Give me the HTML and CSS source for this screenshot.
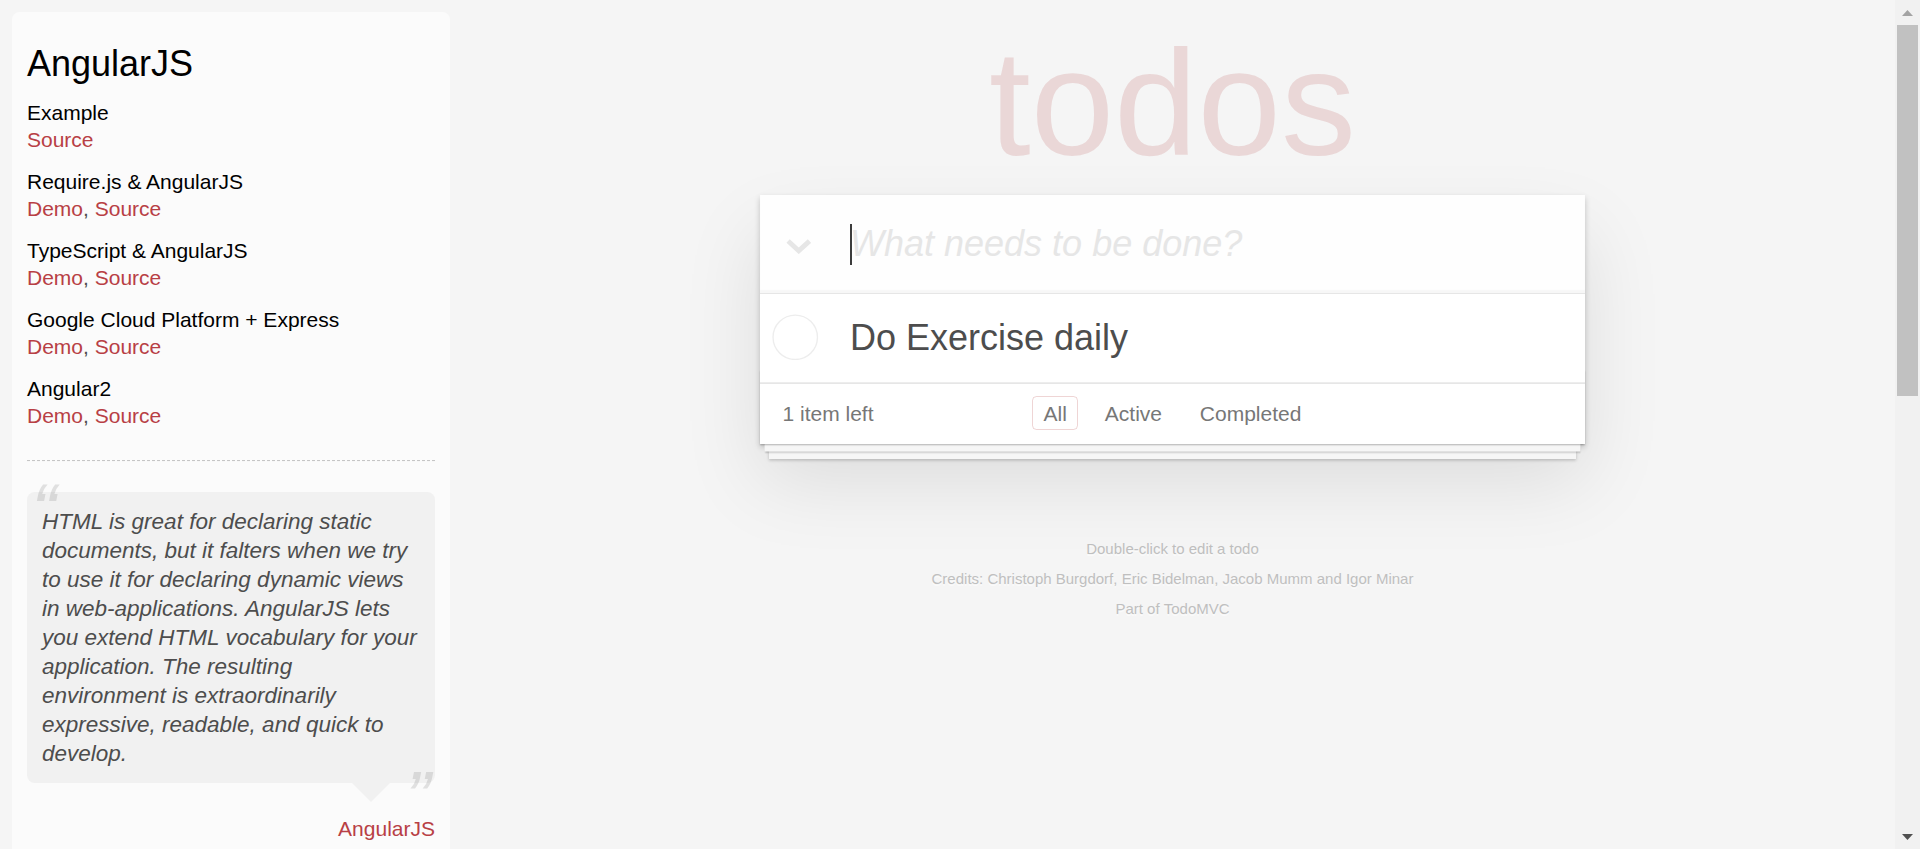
FILE: index.html
```html
<!DOCTYPE html>
<html lang="en">
<head>
<meta charset="utf-8">
<title>AngularJS • TodoMVC</title>
<link rel="stylesheet" href="styles.css">
</head>
<body>
<div class="page">
  <aside class="learn">
    <header>
      <h3>AngularJS</h3>
      <div class="source-links">
        <h5>Example</h5>
        <a href="#">Source</a>
        <h5>Require.js &amp; AngularJS</h5>
        <a href="#">Demo</a>, <a href="#">Source</a>
        <h5>TypeScript &amp; AngularJS</h5>
        <a href="#">Demo</a>, <a href="#">Source</a>
        <h5>Google Cloud Platform + Express</h5>
        <a href="#">Demo</a>, <a href="#">Source</a>
        <h5>Angular2</h5>
        <a href="#">Demo</a>, <a href="#">Source</a>
      </div>
    </header>
    <hr>
    <blockquote class="quote speech-bubble">
      <p>HTML is great for declaring static documents, but it falters when we try to use it for declaring dynamic views in web-applications. AngularJS lets you extend HTML vocabulary for your application. The resulting environment is extraordinarily expressive, readable, and quick to develop.</p>
      <footer><a href="#">AngularJS</a></footer>
    </blockquote>
    <hr>
    <h4>Official Resources</h4>
    <ul>
      <li><a href="#">Tutorial</a></li>
      <li><a href="#">API Reference</a></li>
      <li><a href="#">Developer Guide</a></li>
      <li><a href="#">Applications built with AngularJS</a></li>
      <li><a href="#">Blog</a></li>
      <li><a href="#">FAQ</a></li>
      <li><a href="#">AngularJS Meetups</a></li>
    </ul>
    <h4>Articles and Guides</h4>
    <ul>
      <li><a href="#">Code School AngularJS course</a></li>
      <li><a href="#">5 Awesome AngularJS Features</a></li>
      <li><a href="#">Using Yeoman with AngularJS</a></li>
      <li><a href="#">me&amp;ngular - an introduction to MVW</a></li>
    </ul>
    <h4>Community</h4>
    <ul>
      <li><a href="#">Walkthroughs and Tutorials on YouTube</a></li>
      <li><a href="#">Google Groups mailing list</a></li>
      <li><a href="#">angularjs on Stack Overflow</a></li>
      <li><a href="#">AngularJS on Twitter</a></li>
      <li><a href="#">AngularjJS on Google +</a></li>
    </ul>
    <footer class="learn-foot">
      <hr>
      <em>If you have other helpful links to share, or find any of the links above no longer work, please <a href="#">let us know</a>.</em>
    </footer>
  </aside>

  <div class="main-col">
    <div class="wrap">
      <h1 class="title">todos</h1>
      <section class="todoapp">
        <header class="new-row">
          <span class="toggle-all">
            <svg width="17" height="10" viewBox="0 0 17 10"><polyline points="1.4,1.4 8.5,7.9 15.6,1.4" fill="none" stroke="#e6e6e6" stroke-width="3.2"/></svg>
          </span>
          <input class="new-todo" placeholder="What needs to be done?">
          <span class="caret"></span>
        </header>
        <section class="main">
          <ul class="todo-list">
            <li class="todo">
              <svg class="toggle" width="31" height="31" viewBox="0 0 31 31"><circle cx="15.5" cy="15.5" r="14.8" fill="none" stroke="#ededed" stroke-width="0.9"/></svg>
              <label class="todo-label">Do Exercise daily</label>
            </li>
          </ul>
        </section>
        <footer class="footer">
          <span class="todo-count"><strong>1</strong> item left</span>
          <ul class="filters">
            <li><a class="selected" href="#">All</a></li>
            <li><a href="#">Active</a></li>
            <li><a href="#">Completed</a></li>
          </ul>
          <span class="spacer"></span>
        </footer>
      </section>
      <footer class="info">
        <p>Double-click to edit a todo</p>
        <p>Credits: <a href="#">Christoph Burgdorf</a>, <a href="#">Eric Bidelman</a>, <a href="#">Jacob Mumm</a> and <a href="#">Igor Minar</a></p>
        <p>Part of <a href="#">TodoMVC</a></p>
      </footer>
    </div>
  </div>
</div>

<div class="scrollbar" aria-hidden="true">
  <div class="sb-btn">
    <svg width="11" height="6" viewBox="0 0 11 6"><polygon points="0,6 5.5,0 11,6" fill="#a3a3a3"/></svg>
  </div>
  <div class="sb-track"><div class="sb-thumb"></div></div>
  <div class="sb-btn">
    <svg width="11" height="6" viewBox="0 0 11 6"><polygon points="0,0 5.5,6 11,0" fill="#505050"/></svg>
  </div>
</div>
</body>
</html>
```

FILE: styles.css
```css
html {
  margin: 0;
  padding: 0;
  background: #f5f5f5;
}

body {
  margin: 0;
  padding: 0;
  zoom: 1.5;
  font: 14px "Liberation Sans", Arial, Helvetica, sans-serif;
  line-height: 19.333px;
  background: #f5f5f5;
  color: #4d4d4d;
  font-weight: 300;
}

.page {
  display: flex;
  align-items: flex-start;
  padding-right: 16.667px;
}

/* ---------- fake window scrollbar (overlay) ---------- */
.scrollbar {
  position: fixed;
  top: 0;
  right: 0;
  bottom: 0;
  width: 16.667px;
  display: flex;
  flex-direction: column;
  background: #f1f1f1;
}
.sb-btn {
  flex: none;
  height: 16.667px;
  display: flex;
  align-items: center;
  justify-content: center;
}
.sb-btn svg {
  display: block;
  width: 7.333px;
  height: 4px;
}
.sb-track {
  flex: 1;
  padding: 0 1.333px;
}
.sb-thumb {
  height: 247.333px;
  background: #c1c1c1;
}

/* ---------- learn sidebar ---------- */
.learn {
  flex: none;
  width: 272px;
  margin: 8px 0 0 8px;
  padding: 10px;
  border-radius: 5px;
  background-color: rgba(255, 255, 255, 0.6);
}
.learn a {
  font-weight: normal;
  text-decoration: none;
  color: #b83f45;
}
.learn h3,
.learn h4,
.learn h5 {
  margin: 10px 0;
  font-weight: 500;
  color: #000;
}
.learn h3 {
  font-size: 24px;
  line-height: 28.667px;
}
.learn h4 {
  font-size: 18px;
  line-height: 21.333px;
}
.learn h5 {
  margin-bottom: 0;
  font-size: 14px;
  line-height: 16.667px;
}
.learn ul {
  padding: 0;
  margin: 0 0 30px 25px;
}
.learn li {
  line-height: 20px;
}
.learn p {
  font-size: 15px;
  font-weight: 300;
  line-height: 19.333px;
  margin: 0;
}
.learn hr {
  margin: 20px 0;
  border: 0;
  border-top: 1px dashed #c5c5c5;
  border-bottom: 1px dashed #f7f7f7;
}
.quote {
  border: none;
  margin: 20px 0 60px 0;
}
.quote p {
  font-style: italic;
}
.quote p::before {
  content: '\201C';
  font-size: 50px;
  line-height: 65px;
  opacity: 0.15;
  position: absolute;
  top: -20px;
  left: 3px;
}
.quote p::after {
  content: '\201D';
  font-size: 50px;
  line-height: 65px;
  opacity: 0.15;
  position: absolute;
  bottom: -42px;
  right: 3px;
}
.quote footer {
  position: absolute;
  bottom: -40px;
  right: 0;
}
.quote footer a {
  margin-left: 5px;
  vertical-align: middle;
}
.speech-bubble {
  position: relative;
  padding: 10px;
  background: rgba(0, 0, 0, 0.04);
  border-radius: 5px;
}
.speech-bubble::after {
  content: '';
  position: absolute;
  top: 100%;
  right: 30px;
  border: 13px solid transparent;
  border-top-color: rgba(0, 0, 0, 0.04);
}
.learn-foot em {
  display: block;
}

/* ---------- todo app ---------- */
.main-col {
  flex: 1;
  min-width: 0;
}
.wrap {
  max-width: 550px;
  margin: 0 auto;
}
.title {
  margin: 0;
  padding-top: 11.5px;
  height: 115px;
  font-size: 100px;
  line-height: 115px;
  font-weight: 100;
  text-align: center;
  color: rgba(175, 47, 47, 0.15);
  text-rendering: optimizeLegibility;
}
.todoapp {
  background: #fff;
  margin: 3.5px 0 40px 0;
  position: relative;
  box-shadow: 0 2px 4px 0 rgba(0, 0, 0, 0.2), 0 25px 50px 0 rgba(0, 0, 0, 0.1);
}
.new-row {
  position: relative;
  display: flex;
  height: 65.333px;
  background: rgba(0, 0, 0, 0.003);
  box-shadow: inset 0 -2px 1px rgba(0, 0, 0, 0.03);
}
.toggle-all {
  flex: none;
  width: 60px;
  display: flex;
  align-items: center;
  padding: 4px 0 0 17px;
  box-sizing: border-box;
}
.toggle-all svg {
  display: block;
}
.new-todo {
  flex: 1;
  min-width: 0;
  height: 65.333px;
  box-sizing: border-box;
  margin: 0;
  padding: 16px 16px 16px 0;
  border: none;
  background: transparent;
  font-size: 24px;
  font-family: inherit;
  font-weight: inherit;
  line-height: 33.333px;
  color: inherit;
  outline: none;
}
.new-todo::placeholder {
  font-style: italic;
  font-weight: 300;
  color: #e6e6e6;
}
.caret {
  position: absolute;
  left: 60px;
  top: 19.3px;
  width: 1.2px;
  height: 27.4px;
  background: #3c3c3c;
}
.main {
  position: relative;
  z-index: 2;
  border-top: 1px solid #e6e6e6;
}
.todo-list {
  margin: 0;
  padding: 0;
  list-style: none;
}
.todo {
  display: flex;
  align-items: center;
  font-size: 24px;
  border-bottom: 1px solid #ededed;
}
.toggle {
  flex: none;
  display: block;
  margin: 0 0 1px 8px;
}
.todo-label {
  display: block;
  padding: 15px 15px 15px 21px;
  line-height: 28.667px;
  color: #4d4d4d;
  word-break: break-all;
}
.footer {
  position: relative;
  display: grid;
  grid-template-columns: 1fr auto 1fr;
  align-items: start;
  color: #777;
  padding: 10px 15px;
  height: 20px;
  line-height: 19.333px;
  border-top: 1px solid #e6e6e6;
}
.footer::before {
  content: '';
  position: absolute;
  right: 0;
  bottom: 0;
  left: 0;
  height: 50px;
  overflow: hidden;
  box-shadow: 0 1px 1px rgba(0, 0, 0, 0.2),
              0 8px 0 -3px #f6f6f6,
              0 9px 1px -3px rgba(0, 0, 0, 0.2),
              0 16px 0 -6px #f6f6f6,
              0 17px 2px -6px rgba(0, 0, 0, 0.2);
}
.todo-count {
  position: relative;
  text-align: left;
}
.todo-count strong {
  font-weight: 300;
}
.filters {
  position: relative;
  margin: 0;
  padding: 0;
  list-style: none;
  text-align: center;
  white-space: nowrap;
}
.filters li {
  display: inline;
}
.filters a {
  color: inherit;
  margin: 3px;
  padding: 3px 7px;
  text-decoration: none;
  border: 1px solid transparent;
  border-radius: 3px;
}
.filters a.selected {
  border-color: rgba(175, 47, 47, 0.2);
}
.info {
  margin: 65px auto 0;
  color: #bfbfbf;
  font-size: 10px;
  text-shadow: 0 1px 0 rgba(255, 255, 255, 0.5);
  text-align: center;
}
.info p {
  line-height: 1;
  margin: 10px 0;
}
.info a {
  color: inherit;
  text-decoration: none;
  font-weight: 400;
}
```
